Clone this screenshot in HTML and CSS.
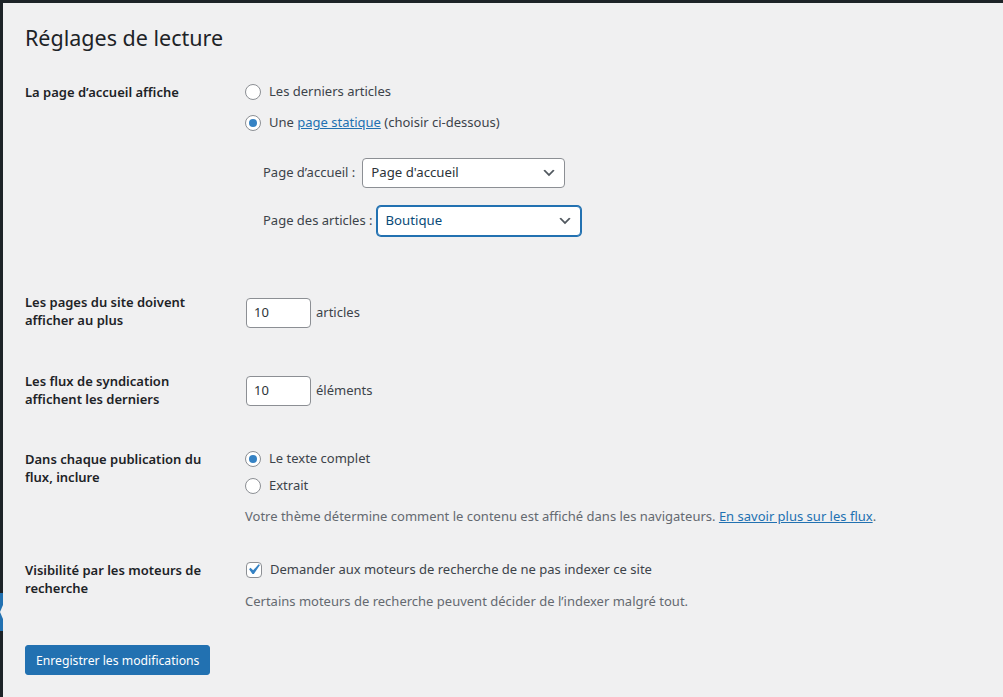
FILE: index.html
```html
<!DOCTYPE html>
<html lang="fr">
<head>
<meta charset="utf-8">
<title>Réglages de lecture</title>
<link rel="stylesheet" href="styles.css">
</head>
<body>
<div class="adminbar"></div>
<div class="layout">
  <div class="sidebar"><div class="current-marker"><span class="notch"></span></div></div>
  <main class="wrap">
    <h1 class="title">Réglages de lecture</h1>

    <div class="row row-front">
      <div class="th">La page d’accueil affiche</div>
      <div class="td">
        <label class="opt"><span class="radio"></span>Les derniers articles</label>
        <label class="opt opt-gap"><span class="radio checked"></span>Une&nbsp;<a href="#" class="link">page statique</a>&nbsp;(choisir ci-dessous)</label>
        <ul class="page-list">
          <li class="page-item item-front"><span>Page d’accueil :</span><div class="select w1"><span>Page d'accueil</span><svg class="chev" viewBox="0 0 20 20" width="16" height="16"><path d="M5 6l5 5 5-5 2 1-7 7-7-7 2-1z"/></svg></div></li>
          <li class="page-item"><span>Page des articles :</span><div class="select w2 focus"><span>Boutique</span><svg class="chev" viewBox="0 0 20 20" width="16" height="16"><path d="M5 6l5 5 5-5 2 1-7 7-7-7 2-1z"/></svg></div></li>
        </ul>
      </div>
    </div>

    <div class="row row-num">
      <div class="th">Les pages du site doivent afficher au plus</div>
      <div class="td td-mid"><span class="num">10</span><span class="unit">articles</span></div>
    </div>

    <div class="row row-num row-num2">
      <div class="th">Les flux de syndication affichent les derniers</div>
      <div class="td td-mid"><span class="num">10</span><span class="unit">éléments</span></div>
    </div>

    <div class="row">
      <div class="th">Dans chaque publication du flux, inclure</div>
      <div class="td">
        <label class="opt opt-tight"><span class="radio checked"></span>Le texte complet</label>
        <label class="opt opt-tight"><span class="radio"></span>Extrait</label>
        <p class="desc">Votre thème détermine comment le contenu est affiché dans les navigateurs. <a href="#" class="link">En savoir plus sur les flux</a>.</p>
      </div>
    </div>

    <div class="row">
      <div class="th">Visibilité par les moteurs de recherche</div>
      <div class="td">
        <label class="opt"><span class="checkbox"><svg viewBox="0 0 20 20" width="21" height="21"><path d="M14.83 4.89l1.34.94-5.81 8.38H9.02L5.78 9.67l1.34-1.25 2.57 2.4z"/></svg></span>Demander aux moteurs de recherche de ne pas indexer ce site</label>
        <p class="desc">Certains moteurs de recherche peuvent décider de l’indexer malgré tout.</p>
      </div>
    </div>

    <div class="submit"><button class="button" type="button">Enregistrer les modifications</button></div>
  </main>
</div>
</body>
</html>
```

FILE: styles.css
```css
html, body { margin: 0; padding: 0; }
body {
  background: #f0f0f1;
  color: #3c434a;
  font-family: "Noto Sans", "Open Sans", sans-serif;
  font-size: 13px;
  line-height: 1.5;
  height: 697px;
  overflow: hidden;
}
.adminbar { height: 3px; background: #1d2327; }
.layout { display: flex; min-height: 694px; }
.sidebar { width: 3px; background: #1d2327; position: relative; flex: none; }
.current-marker {
  position: absolute; left: 0; top: 590px; width: 3px; height: 38px; background: #2271b1;
}
.notch {
  position: absolute; right: 0; top: 12px; width: 0; height: 0;
  border-top: 7px solid transparent; border-bottom: 7px solid transparent;
  border-right: 3px solid #f0f0f1;
}
.wrap { flex: 1; padding-left: 22px; }
.title {
  margin: 0; padding: 21px 0 0; height: 39px;
  font-size: 21.5px; font-weight: 400; line-height: 1.3; color: #1d2327;
}
.row { display: grid; grid-template-columns: 210px 1fr; }
.th {
  width: 200px; padding: 20px 10px 20px 0;
  font-weight: 600; line-height: 18.2px; color: #1d2327;
}
.td { padding: 15px 10px; }
.td-mid { display: flex; align-items: center; }
.row-num { min-height: 79px; }
.row-num2 { min-height: 78px; }
.opt { display: flex; align-items: center; height: 28px; white-space: nowrap; }
.opt-gap { margin-top: 3px; }
.opt-tight { height: 27px; }
.radio {
  box-sizing: border-box; width: 16px; height: 16px; border-radius: 50%;
  border: 1px solid #8c8f94; background: #fff; margin-right: 8px; flex: none;
  display: flex; align-items: center; justify-content: center;
}
.radio.checked::after {
  content: ""; width: 8px; height: 8px; border-radius: 50%; background: #3582c4;
}
.checkbox {
  box-sizing: border-box; width: 16px; height: 16px; border-radius: 4px;
  border: 1px solid #8c8f94; background: #fff; margin: 0 8px 0 1px; flex: none;
  position: relative;
}
.checkbox svg { position: absolute; left: -4px; top: -4px; fill: #3582c4; }
.link { color: #2271b1; text-decoration: underline; }
.page-list { list-style: none; margin: 21px 0 22px; padding: 0 0 0 18px; }
.page-item { display: flex; align-items: center; gap: 4px; height: 30px; }
.page-item.item-front { gap: 7px; }
.page-item + .page-item { margin-top: 18px; }
.select {
  box-sizing: border-box; height: 30px; border: 1px solid #8c8f94; border-radius: 4px;
  background: #fff; color: #2c3338; display: flex; align-items: center;
  justify-content: space-between; padding: 0 7px 0 8px; font-size: 13.2px;
}
.select.w1 { width: 203px; }
.select.w2 { width: 204px; }
.select.focus { border-color: #2271b1; box-shadow: 0 0 0 1px #2271b1; color: #0a4b78; }
.chev { fill: #50575e; }
.num {
  box-sizing: border-box; width: 65px; height: 30px; border: 1px solid #8c8f94;
  border-radius: 4px; background: #fff; color: #2c3338; padding: 0 7px;
  display: flex; align-items: center; margin-left: 1px;
}
.unit { margin-left: 5px; }
.desc { margin: 8px 0 0; color: #646970; white-space: nowrap; line-height: 19px; }
.submit { padding-top: 19px; }
.button {
  box-sizing: border-box; height: 30px; padding: 0 10px; border: 1px solid #2271b1;
  border-radius: 3px; background: #2271b1; color: #fff;
  font-family: inherit; font-size: 12.2px; cursor: pointer;
}
```
